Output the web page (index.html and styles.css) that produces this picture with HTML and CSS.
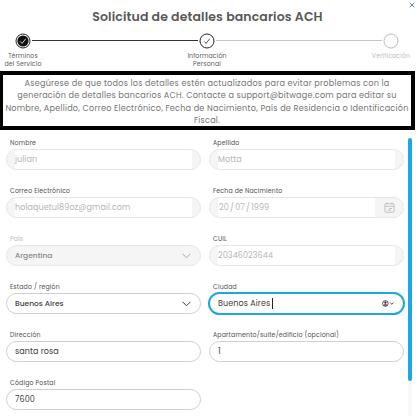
FILE: index.html
```html
<!DOCTYPE html>
<html lang="es">
<head>
  <meta charset="UTF-8" />
  <meta name="viewport" content="width=device-width, initial-scale=1.0" />
  <title>Solicitud de detalles bancarios ACH</title>
  <link rel="stylesheet" href="styles.css">
</head>
<body>
  <div class="modal">
    <button class="close" aria-label="Cerrar">
      <svg width="6" height="6" viewBox="0 0 6 6"><path d="M.7.7l4.6 4.6M5.3.7L.7 5.3" /></svg>
    </button>
    <h1>Solicitud de detalles bancarios ACH</h1>

    <div class="steps">
      <div class="step">
        <svg class="dot" width="16" height="16" viewBox="0 0 16 16">
          <circle class="ring" cx="8" cy="8" r="7" />
          <circle class="fill" cx="8" cy="8" r="5.6" />
          <path class="check light" d="M5.3 8.5l1.8 1.9 3.6-4.6" />
        </svg>
        <span>Términos<br>del Servicio</span>
      </div>
      <div class="line"></div>
      <div class="step">
        <svg class="dot" width="16" height="16" viewBox="0 0 16 16">
          <circle class="ring" cx="8" cy="8" r="7" />
          <path class="check" d="M5.3 8.5l1.8 1.9 3.6-4.6" />
        </svg>
        <span>Información<br>Personal</span>
      </div>
      <div class="line pending"></div>
      <div class="step pending">
        <svg class="dot" width="16" height="16" viewBox="0 0 16 16">
          <circle class="ring" cx="8" cy="8" r="7" />
        </svg>
        <span>Verificación</span>
      </div>
    </div>

    <p class="notice">
      <span>Asegúrese de que todos los detalles estén actualizados para evitar problemas con la</span>
      <span>generación de detalles bancarios ACH. Contacte a support@bitwage.com para editar su</span>
      <span>Nombre, Apellido, Correo Electrónico, Fecha de Nacimiento, País de Residencia o Identificación</span>
      <span>Fiscal.</span>
    </p>

    <div class="content">
      <form class="form">
        <div class="field">
          <label>Nombre</label>
          <div class="control disabled"><span class="value">julian</span></div>
        </div>
        <div class="field">
          <label>Apellido</label>
          <div class="control disabled"><span class="value">Motta</span></div>
        </div>
        <div class="field">
          <label>Correo Electrónico</label>
          <div class="control disabled"><span class="value">holaquetul89oz@gmail.com</span></div>
        </div>
        <div class="field">
          <label>Fecha de Nacimiento</label>
          <div class="control disabled date">
            <span class="value">20 / 07 / 1999</span>
            <svg width="11" height="11" viewBox="0 0 11 11"><rect x=".9" y="1.7" width="9.2" height="8.6" rx="1" /><path d="M1 4.3h9M3 .4v2M8 .4v2M5 6.5h3M3.5 8.2H7" /></svg>
          </div>
        </div>
        <div class="field">
          <label class="muted">País</label>
          <div class="control select off">
            <span class="value">Argentina</span>
            <svg width="9" height="6" viewBox="0 0 9 6"><path d="M.6.8l3.9 4 3.9-4" /></svg>
          </div>
        </div>
        <div class="field">
          <label>CUIL</label>
          <div class="control disabled"><span class="value">20346023644</span></div>
        </div>
        <div class="field">
          <label>Estado / región</label>
          <div class="control select">
            <span class="value">Buenos Aires</span>
            <svg width="9" height="6" viewBox="0 0 9 6"><path d="M.6.8l3.9 4 3.9-4" /></svg>
          </div>
        </div>
        <div class="field">
          <label>Ciudad</label>
          <div class="control focused">
            <span class="value">Buenos Aires</span><span class="caret"></span>
            <svg class="autofill" width="12" height="7" viewBox="0 0 12 7">
              <circle cx="3.4" cy="3.5" r="2.8" />
              <circle class="person" cx="3.4" cy="2.7" r="1.1" />
              <path class="person" d="M1.7 5.4c.3-1.7 3.1-1.7 3.4 0z" />
              <path d="M8.3 2.7l1.6 1.5 1.6-1.5" />
            </svg>
          </div>
        </div>
        <div class="field">
          <label>Dirección</label>
          <div class="control"><span class="value">santa rosa</span></div>
        </div>
        <div class="field">
          <label>Apartamento/suite/edificio (opcional)</label>
          <div class="control"><span class="value">1</span></div>
        </div>
        <div class="field">
          <label>Código Postal</label>
          <div class="control"><span class="value">7600</span></div>
        </div>
      </form>
      <div class="scrollbar"><div class="thumb"></div></div>
    </div>
  </div>
</body>
</html>
```
FILE: styles.css
```css
:root {
  --blue: #1ba8e2;
  --text: #3c3c3c;
  --muted: #b5b5b5;
}
* { box-sizing: border-box; }
body {
  margin: 0;
  background: #fff;
  color: var(--text);
  font-family: Poppins, Inter, "Open Sans", sans-serif;
  overflow: hidden;
}
svg {
  display: block;
  flex: none;
  fill: none;
  stroke: currentColor;
}
.modal {
  position: relative;
  width: 415px;
  height: 419px;
}
.close {
  position: absolute;
  top: 2px;
  right: 0;
  padding: 0;
  border: none;
  background: none;
  color: #6483a8;
}
h1 {
  margin: 0;
  padding-top: 8px;
  height: 33px;
  font-size: 12.5px;
  line-height: 18px;
  font-weight: 600;
  letter-spacing: 0.12px;
  text-align: center;
  color: #585858;
}
.steps {
  display: flex;
  align-items: flex-start;
  width: 414px;
  height: 38px;
  padding: 0 15px;
}
.step {
  display: flex;
  flex-direction: column;
  align-items: center;
  width: 16px;
  color: #222;
}
.step span {
  margin-top: 3px;
  font-size: 6.2px;
  line-height: 8px;
  letter-spacing: 0.15px;
  text-align: center;
  white-space: nowrap;
  color: #606060;
}
.step.pending,
.step.pending span { color: #bdbdbd; }
.fill { fill: #111; stroke: none; }
.check { stroke-width: 0.8; }
.check.light { stroke: #fff; }
.line {
  flex: 1;
  height: 1px;
  margin: 7px 1px 0;
  background: #333;
}
.line.pending { background: #c4c4c4; }
.notice {
  display: flex;
  flex-direction: column;
  align-items: center;
  margin: 0;
  height: 59px;
  padding-top: 2px;
  border: 4px solid #000;
  border-left-width: 3px;
  font-size: 8.1px;
  line-height: 12.3px;
  letter-spacing: 0.24px;
  white-space: nowrap;
  color: #737373;
}
.content {
  display: flex;
  justify-content: space-between;
  padding: 7px 3px 0 6px;
}
.form {
  display: grid;
  grid-template-columns: 195px 195px;
  grid-auto-rows: 48px;
  column-gap: 8px;
}
.field label {
  display: block;
  height: 12px;
  padding-left: 4px;
  font-size: 6.2px;
  line-height: 12px;
  letter-spacing: 0.19px;
  color: #505050;
}
.field label.muted { color: #bdbdbd; }
.control {
  display: flex;
  align-items: center;
  height: 21px;
  padding: 0 8px;
  border: 1px solid #cfcfcf;
  border-radius: 11px;
  font-size: 8px;
  letter-spacing: 0.1px;
}
.control.disabled {
  border-color: #e6e6e6;
  background: linear-gradient(#fff, #fff) 8px 0 / calc(100% - 16px) 100% no-repeat #f5f5f5;
  color: var(--muted);
}
.control.date {
  justify-content: space-between;
  background-size: 157px 100%;
  padding-left: 9px;
  word-spacing: -1px;
}
.date svg { stroke-width: 0.8; }
.select {
  justify-content: space-between;
  padding-right: 9px;
  font-size: 7.5px;
  font-weight: 500;
  letter-spacing: 0;
}
.select.off {
  background: #f5f5f5;
  border-color: #e6e6e6;
  color: #858585;
}
.off svg { color: #aaa; }
.control.focused {
  height: 23px;
  margin: -1px;
  padding: 0 9px 0 8px;
  border: 2px solid var(--blue);
  border-radius: 12px;
}
.caret {
  width: 1px;
  height: 11px;
  margin-left: 2px;
  background: #222;
}
.autofill {
  margin-left: auto;
  color: #222;
  stroke-width: 0.8;
}
.person { fill: currentColor; stroke: none; }
.scrollbar {
  width: 4px;
  height: 279px;
  margin-top: 1px;
  border-radius: 2px;
  background: #f8f8f8;
}
.thumb {
  height: 243px;
  border-radius: 2px;
  background: var(--blue);
}
```
